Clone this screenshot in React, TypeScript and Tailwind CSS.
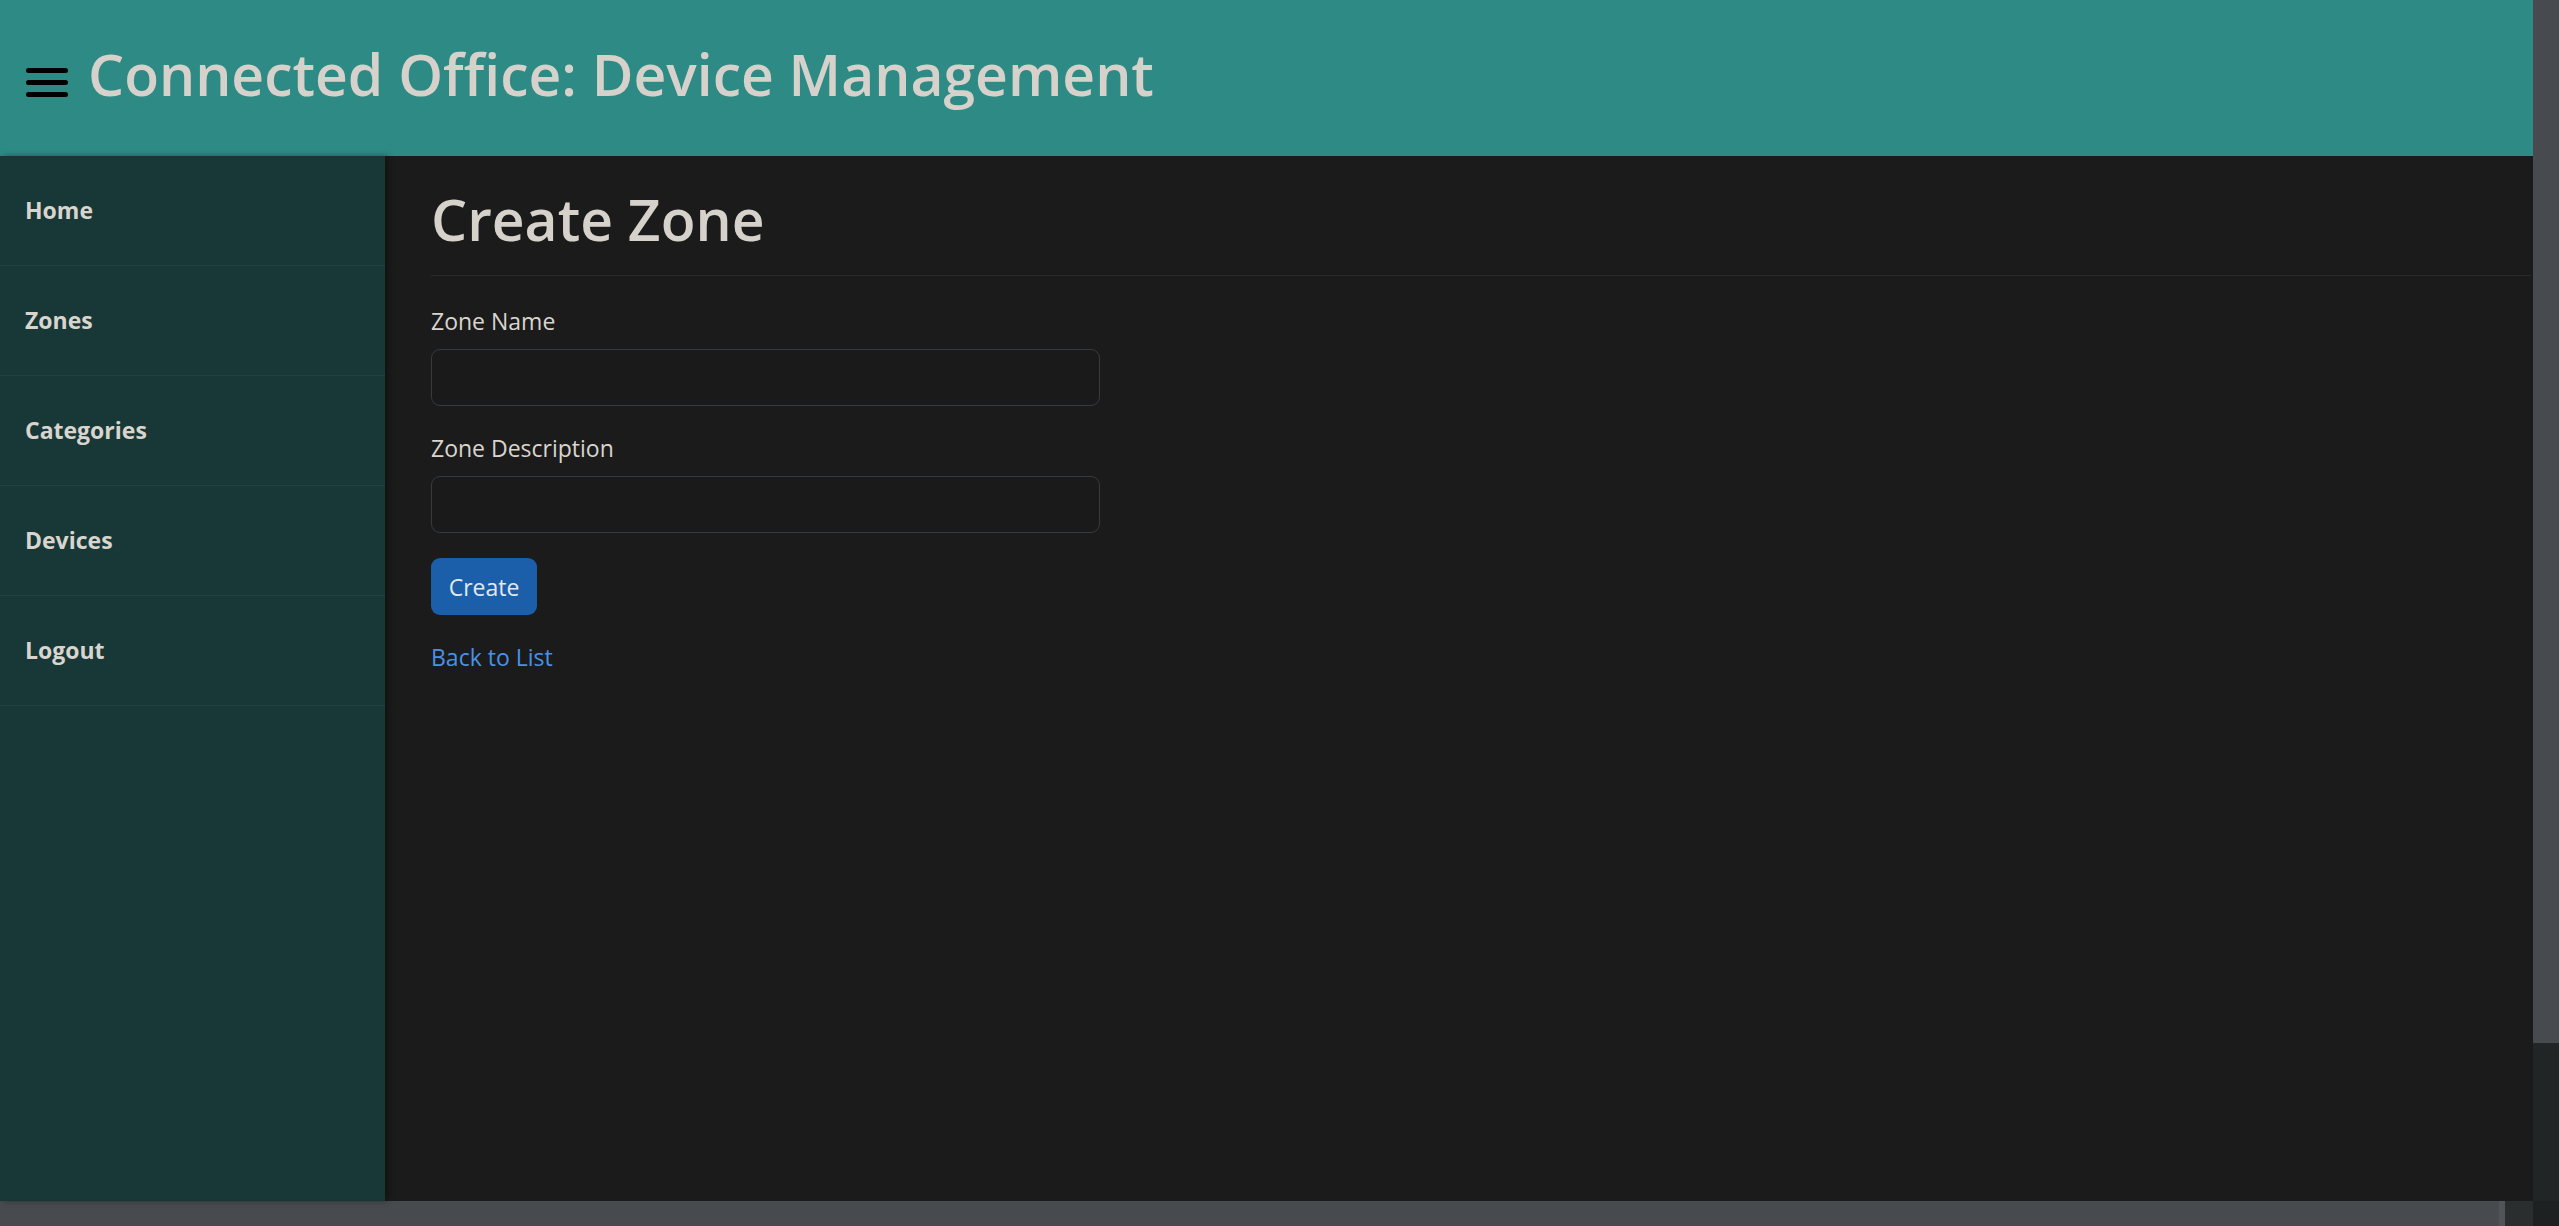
import React from "react";

const navItems = ["Home", "Zones", "Categories", "Devices", "Logout"];

function MenuIcon() {
	return (
		<svg width="42" height="29" viewBox="0 0 42 29" className="shrink-0">
			<rect x="0" y="0" width="42" height="5" rx="2.5" fill="#000" />
			<rect x="0" y="12" width="42" height="5" rx="2.5" fill="#000" />
			<rect x="0" y="24" width="42" height="5" rx="2.5" fill="#000" />
		</svg>
	);
}

function Field({ label }: { label: string }) {
	return (
		<div className="flex flex-col">
			<label className="text-[23px] leading-[36px] text-[#d9d5ce] mb-[10px]">{label}</label>
			<input
				type="text"
				className="w-[669px] h-[57px] rounded-[9px] border border-[#363b40] bg-[#1a1a1a] outline-none px-4 text-[#d9d5ce]"
			/>
		</div>
	);
}

export default function App() {
	return (
		<div className="h-[1226px] w-full flex flex-col overflow-hidden font-['Open_Sans',sans-serif]">
			<div className="flex flex-1 min-h-0">
				<div className="flex-1 flex flex-col min-w-0">
					<header className="h-[156px] shrink-0 bg-[#2d8a85] flex items-center pl-[26px] gap-[20px]">
						<div className="mt-[8px]">
							<MenuIcon />
						</div>
						<h1 className="text-[57px] leading-[1.2] font-semibold text-[#d6d2cb] mb-[8px]">
							Connected Office: Device Management
						</h1>
					</header>
					<div className="flex flex-1 min-h-0">
						<nav className="w-[385px] shrink-0 bg-[#183838] shadow-[3px_0_6px_rgba(0,0,0,0.35)] z-10">
							<ul>
								{navItems.map((item) => (
									<li
										key={item}
										className="h-[110px] border-b border-[#1e4343] flex items-center pl-[25px] text-[23px] font-bold text-[#d9d5ce]"
									>
										{item}
									</li>
								))}
							</ul>
						</nav>
						<main className="flex-1 bg-[#1b1b1b] border-r-2 border-[#161b1e]">
							<div className="ml-[46px] mt-[29px] pb-[22px] border-b border-[#2a2a2a]">
								<h2 className="text-[57px] leading-[1.2] font-semibold text-[#d6d2cb]">Create Zone</h2>
							</div>
							<form className="ml-[46px] mt-[27px] flex flex-col">
								<Field label="Zone Name" />
								<div className="mt-[24px]">
									<Field label="Zone Description" />
								</div>
								<div className="mt-[25px]">
									<button
										type="button"
										className="h-[57px] w-[106px] rounded-[9px] bg-[#1b5faa] text-[23px] text-[#e3e8f0]"
									>
										Create
									</button>
								</div>
								<a href="#" className="mt-[24px] text-[23px] leading-[36px] text-[#4a91e6] w-fit">
									Back to List
								</a>
							</form>
						</main>
					</div>
				</div>
				<div className="w-[26px] shrink-0 flex flex-col">
					<div className="h-[1043px] bg-[#474b4f]" />
					<div className="flex-1 bg-[#212525]" />
				</div>
			</div>
			<div className="h-[25px] shrink-0 flex">
				<div className="w-[2505px] bg-[#474b4f] border-r-[6px] border-[#50555a]" />
				<div className="flex-1 bg-[#2a2e2f]" />
				<div className="w-[26px] bg-[#1e2121]" />
			</div>
		</div>
	);
}
